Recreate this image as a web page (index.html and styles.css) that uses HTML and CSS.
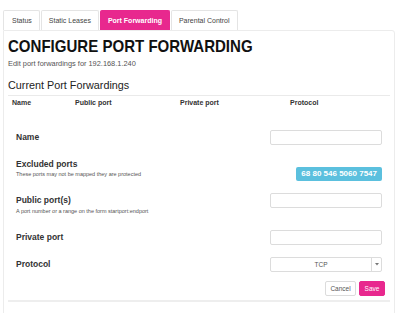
FILE: index.html
```html
<!DOCTYPE html>
<html>
<head>
<meta charset="utf-8">
<link rel="stylesheet" href="styles.css">
</head>
<body>
<div class="page">
  <ul class="tabs">
    <li class="tab">Status</li>
    <li class="tab">Static Leases</li>
    <li class="tab active">Port Forwarding</li>
    <li class="tab">Parental Control</li>
  </ul>
  <div class="panel">
    <h1 class="title">CONFIGURE PORT FORWARDING</h1>
    <p class="subtitle">Edit port forwardings for 192.168.1.240</p>
    <h2 class="section">Current Port Forwardings</h2>
    <div class="thead">
      <span class="th th-name">Name</span>
      <span class="th th-pub">Public port</span>
      <span class="th th-priv">Private port</span>
      <span class="th th-proto">Protocol</span>
    </div>
    <div class="form">
      <div class="row row-name">
        <div class="label"><div class="lbl">Name</div></div>
        <div class="ctrl"><div class="input"></div></div>
      </div>
      <div class="row row-excl">
        <div class="label"><div class="lbl">Excluded ports</div><div class="help">These ports may not be mapped they are protected</div></div>
        <div class="ctrl ctrl-badge"><span class="badge">68 80 546 5060 7547</span></div>
      </div>
      <div class="row row-pub">
        <div class="label"><div class="lbl">Public port(s)</div><div class="help">A port number or a range on the form startport:endport</div></div>
        <div class="ctrl"><div class="input"></div></div>
      </div>
      <div class="row row-priv">
        <div class="label"><div class="lbl">Private port</div></div>
        <div class="ctrl"><div class="input"></div></div>
      </div>
      <div class="row row-proto">
        <div class="label"><div class="lbl">Protocol</div></div>
        <div class="ctrl">
          <div class="select"><span class="sel-val">TCP</span><span class="sel-caret"><svg width="4" height="3" viewBox="0 0 4 3"><path d="M0 0h4L2 2.5z" fill="#777"/></svg></span></div>
        </div>
      </div>
      <div class="actions">
        <span class="btn btn-cancel">Cancel</span>
        <span class="btn btn-save">Save</span>
      </div>
    </div>
    <div class="rule"></div>
  </div>
</div>
</body>
</html>
```
FILE: styles.css
```css
* { box-sizing: border-box; }
html, body { margin: 0; padding: 0; background: #fff; }
body { font-family: "Liberation Sans", Arial, sans-serif; color: #333; overflow: hidden; }
.page { padding: 10px 5px 0 3px; }
.tabs { list-style: none; margin: 0; padding: 0; display: flex; gap: 1px; height: 20px; }
.tab { font-size: 7px; color: #444; border: 1px solid #e4e4e4; border-bottom: none; border-radius: 2px 2px 0 0; padding: 0 7px; line-height: 19px; height: 20px; }
.tab:first-child { padding: 0 7px 0 8px; }
.tab.active { background: #e8288e; border-color: #e8288e; color: #fff; font-weight: bold; }
.panel { border: 1px solid #ececec; border-radius: 0 3px 0 0; padding: 6px 4px 0 4px; height: 300px; }
.title { margin: 0; font-size: 17px; font-weight: bold; color: #111; line-height: 20px; transform: scaleX(0.885); transform-origin: left center; white-space: nowrap; }
.subtitle { margin: 2px 0 0; font-size: 7.4px; color: #555; line-height: 10px; }
.section { margin: 9px 0 0; font-size: 10.8px; font-weight: normal; color: #222; line-height: 14px; padding-bottom: 3px; border-bottom: 1px solid #eaeaea; }
.thead { display: flex; font-size: 7px; font-weight: bold; color: #333; line-height: 10px; margin-top: 2px; }
.th-name { padding-left: 4px; width: 67px; }
.th-pub { width: 105px; }
.th-priv { width: 110px; }
.form { padding: 22px 8px 0 8px; }
.row { display: flex; justify-content: space-between; align-items: flex-start; }
.label { padding-top: 2px; }
.lbl { font-size: 8.5px; font-weight: bold; color: #333; line-height: 10px; }
.help { font-size: 5.5px; color: #555; line-height: 7px; margin-top: 3px; }
.ctrl { width: 112px; }
.input { height: 15px; border: 1px solid #dcdcdc; border-radius: 2px; background: #fff; }
.row-excl { margin-top: 12px; }
.row-excl .help { margin-top: 2px; }
.ctrl-badge { display: flex; justify-content: flex-end; padding-top: 10px; }
.badge { background: #5bc0de; color: #fff; font-size: 8px; font-weight: bold; line-height: 14px; padding: 0 5px; border-radius: 2px; }
.row-pub { margin-top: 12px; }
.row-priv { margin-top: 15px; }
.row-proto { margin-top: 12px; }
.select { height: 15px; border: 1px solid #dcdcdc; border-radius: 2px; display: flex; font-size: 6.5px; color: #555; }
.sel-val { flex: 1; text-align: center; line-height: 13px; }
.sel-caret { width: 10px; border-left: 1px solid #dcdcdc; display: flex; align-items: center; justify-content: center; }
.actions { display: flex; justify-content: flex-end; gap: 3px; margin-top: 9px; margin-right: -3px; }
.btn { font-size: 6.5px; line-height: 13px; height: 15px; border-radius: 2px; }
.btn-cancel { border: 1px solid #dcdcdc; color: #555; width: 31px; text-align: center; }
.btn-save { background: #e8288e; border: 1px solid #e8288e; color: #fff; width: 26px; text-align: center; }
.rule { margin-top: 4px; height: 2px; background: #eeeeee; }
```
